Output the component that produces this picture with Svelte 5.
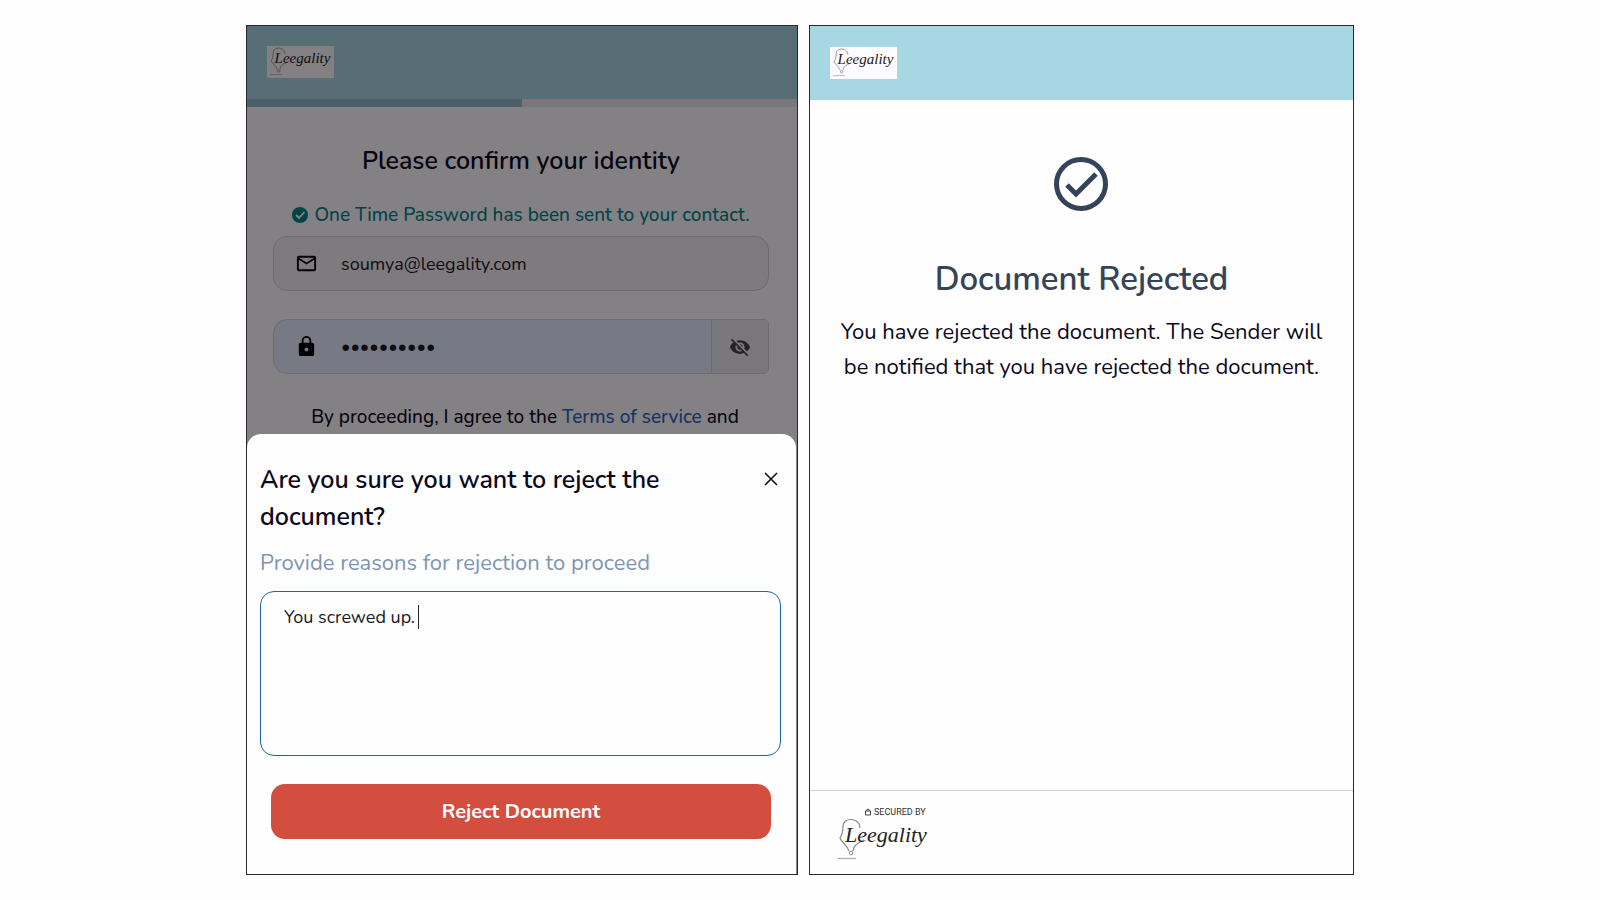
<script>
  let email = "soumya@leegality.com";
  let password = "abcdefghij";
  let reason = "You screwed up. ";
  let showPassword = false;
</script>

{#snippet logo()}
  <svg class="logo" viewBox="0 0 90 44" role="img" aria-label="Leegality">
    <path
      d="M22 10C22 -1 5 -1 5 8C5 14 4 17 2 20C4 25 9 27 11 33M15 33C15 28 19 25 26 22"
      fill="none"
      stroke="#888"
      stroke-width="1.2"
    />
    <circle cx="13" cy="35" r="1.8" fill="none" stroke="#888" />
    <path d="M0 40.500H18" stroke="#aaa" stroke-width="1.2" />
    <text x="7" y="24">Leegality</text>
  </svg>
{/snippet}

<div class="page">
  <main class="phone confirm">
    <header>
      <div class="brand">{@render logo()}</div>
    </header>
    <div class="progress"><div class="bar"></div></div>

    <form class="identity">
      <h2>Please confirm your identity</h2>
      <p class="sent">
        <svg width="16" height="16" viewBox="0 0 16 16" aria-hidden="true">
          <circle cx="8" cy="8" r="8" fill="currentColor" />
          <path d="M4 8L7 11L12.500 5" fill="none" stroke="#fff" stroke-width="1.8" />
        </svg>
        One Time Password has been sent to your contact.
      </p>

      <label class="field">
        <svg width="23" height="23" viewBox="0 0 24 24" aria-label="Email">
          <path
            d="M22 6c0-1.100-.9-2-2-2H4c-1.100 0-2 .9-2 2v12c0 1.100.9 2 2 2h16c1.100 0 2-.9 2-2V6zm-2 0l-8 5-8-5h16zm0 12H4V8l8 5 8-5v10z"
          />
        </svg>
        <input type="email" bind:value={email} />
      </label>

      <div class="field secret">
        <label for="otp">
          <svg width="23" height="23" viewBox="0 0 24 24" aria-label="Password">
            <path
              d="M18 8h-1V6c0-2.760-2.240-5-5-5S7 3.240 7 6v2H6c-1.100 0-2 .9-2 2v10c0 1.100.9 2 2 2h12c1.100 0 2-.9 2-2V10c0-1.100-.9-2-2-2zm-6 9c-1.100 0-2-.9-2-2s.9-2 2-2 2 .9 2 2-.9 2-2 2zm3.100-9H8.900V6c0-1.710 1.390-3.100 3.100-3.100s3.100 1.390 3.100 3.100v2z"
            />
          </svg>
        </label>
        <input id="otp" type={showPassword ? "text" : "password"} value={password} />
        <button
          type="button"
          class="eye"
          aria-label="Show password"
          on:click={() => (showPassword = !showPassword)}
        >
          <svg width="22" height="22" viewBox="0 0 24 24">
            <path
              d="M12 7c2.760 0 5 2.240 5 5 0 .65-.13 1.260-.36 1.830l2.920 2.920c1.510-1.260 2.700-2.890 3.430-4.750-1.730-4.390-6-7.500-11-7.500-1.400 0-2.740.25-3.980.7l2.160 2.160C10.740 7.130 11.350 7 12 7zM2 4.270l2.280 2.280.46.46C3.080 8.300 1.780 10.020 1 12c1.730 4.390 6 7.500 11 7.500 1.550 0 3.030-.3 4.380-.84l.42.42L19.730 22 21 20.730 3.270 3 2 4.270zM7.530 9.800l1.550 1.550c-.05.21-.08.43-.08.65 0 1.660 1.340 3 3 3 .22 0 .44-.03.65-.08l1.550 1.550c-.67.33-1.410.53-2.200.53-2.760 0-5-2.240-5-5 0-.79.2-1.530.53-2.200zm4.310-.78l3.150 3.150.02-.16c0-1.660-1.340-3-3-3l-.17.01z"
            />
          </svg>
        </button>
      </div>

      <p class="terms">
        By proceeding, I agree to the <a href="#terms">Terms of service</a> and
      </p>
    </form>

    <div class="backdrop"></div>

    <section class="sheet" role="dialog" aria-labelledby="reject-title">
      <div class="sheet-head">
        <h2 id="reject-title">Are you sure you want to reject the document?</h2>
        <button type="button" class="close" aria-label="Close">
          <svg width="14" height="14" viewBox="0 0 14 14">
            <path d="M1 1L13 13M13 1L1 13" stroke="#111" stroke-width="1.6" />
          </svg>
        </button>
      </div>
      <label class="hint" for="reason">Provide reasons for rejection to proceed</label>
      <div class="reason">
        <textarea id="reason" bind:value={reason}></textarea>
        <span class="caret"></span>
      </div>
      <button type="button" class="reject">Reject Document</button>
    </section>
  </main>

  <section class="phone result">
    <header>
      <div class="brand">{@render logo()}</div>
    </header>
    <div class="message">
      <svg class="done" width="54" height="54" viewBox="0 0 54 54" aria-hidden="true">
        <circle cx="27" cy="27" r="24.500" fill="none" stroke="#33445a" stroke-width="5" />
        <path d="M13 28L22 37L42 17" fill="none" stroke="#33445a" stroke-width="5" />
      </svg>
      <h1>Document Rejected</h1>
      <p>You have rejected the document. The Sender will be notified that you have rejected the document.</p>
    </div>
    <footer>
      <div class="secured">
        <svg width="6" height="8" viewBox="0 0 6 8" aria-hidden="true">
          <path d="M.5 3H5.500V7H.5ZM1.500 3V2Q3 0 4.500 2V3" fill="none" stroke="#444" />
        </svg>
        SECURED BY
      </div>
      {@render logo()}
    </footer>
  </section>
</div>

<style>
  :global(body) {
    margin: 0;
    background: #fefefe;
  }

  .page {
    display: flex;
    gap: 11px;
    box-sizing: border-box;
    min-height: 100vh;
    max-width: 1108px;
    margin: 0 auto;
    padding: 25px 0;
    font-family: Nunito, Lato, sans-serif;
    color: #0c0820;
  }

  .phone {
    position: relative;
    display: flex;
    flex-direction: column;
    box-sizing: border-box;
    border: 1px solid #2b272c;
    background: #fefefe;
    overflow: hidden;
  }
  .confirm {
    flex: 552 1 0;
  }
  .result {
    flex: 545 1 0;
  }

  h1,
  h2,
  p {
    margin: 0;
  }
  input,
  textarea,
  button {
    font-family: inherit;
  }
  svg {
    flex: none;
  }

  header {
    box-sizing: border-box;
    height: 73px;
    padding: 20px;
    background: #a8d7e4;
  }
  .result header {
    height: 74px;
    padding-top: 21px;
  }
  .brand {
    display: flex;
    justify-content: center;
    align-items: center;
    width: 67px;
    height: 32px;
    background: #fdfbfd;
  }
  .brand .logo {
    width: 63px;
    height: 30px;
  }
  .logo {
    display: block;
    width: 90px;
    height: 44px;
  }
  .logo text {
    font: italic 22px "Liberation Serif", serif;
    fill: #222;
  }

  .progress {
    height: 8px;
    background: #ece8ee;
  }
  .bar {
    width: 50%;
    height: 100%;
    background: #92bdcd;
  }

  .identity {
    display: flex;
    flex-direction: column;
    padding: 36px 28px 0 26px;
  }
  .identity h2 {
    font-size: 25px;
    line-height: 36px;
    font-weight: 600;
    text-align: center;
  }
  .sent {
    display: flex;
    justify-content: center;
    align-items: center;
    gap: 6px;
    margin: 21px 0 6px;
    font-size: 19px;
    line-height: 30px;
    font-weight: 500;
    color: #008488;
  }

  .field {
    display: flex;
    align-items: center;
    box-sizing: border-box;
    height: 55px;
    padding-left: 21px;
    border: 1px solid #d2d0d8;
    border-radius: 14px;
    background: #f3f0f4;
  }
  .field input {
    flex: 1;
    min-width: 0;
    margin-left: 23px;
    padding: 0;
    border: 0;
    outline: 0;
    background: none;
    font-size: 18px;
    color: #1c1824;
  }
  .secret {
    margin-top: 28px;
    border-radius: 14px 6px 6px 14px;
    background: #e6f0ff;
  }
  .secret label {
    display: flex;
  }
  .eye {
    display: flex;
    justify-content: center;
    align-items: center;
    align-self: stretch;
    width: 57px;
    padding: 0;
    border: 0;
    border-left: 1px solid #ced2d8;
    border-radius: 0 5px 5px 0;
    background: #e9eaee;
    fill: #444;
  }

  .terms {
    margin-top: 28px;
    padding-left: 8px;
    font-size: 19px;
    line-height: 30px;
    font-weight: 500;
    text-align: center;
  }
  .terms a {
    color: #1f66be;
    text-decoration: none;
  }

  .backdrop {
    position: absolute;
    inset: 0;
    background: rgba(4, 0, 4, 0.49);
  }

  .sheet {
    position: absolute;
    left: 0;
    right: 1px;
    bottom: 0;
    display: flex;
    flex-direction: column;
    padding: 28px 15px 35px 13px;
    border-radius: 14px 14px 0 0;
    background: #fefefe;
  }
  .sheet-head {
    display: flex;
    justify-content: space-between;
    align-items: flex-start;
  }
  .sheet h2 {
    max-width: 430px;
    font-size: 25px;
    line-height: 37px;
    font-weight: 600;
  }
  .close {
    display: flex;
    margin: 10px 3px 0 0;
    padding: 0;
    border: 0;
    background: none;
  }
  .hint {
    margin: 11px 0 12px;
    font-size: 22px;
    line-height: 32px;
    color: #7d95b2;
  }
  .reason {
    position: relative;
    display: flex;
  }
  textarea {
    flex: 1;
    box-sizing: border-box;
    height: 165px;
    padding: 11px 23px;
    border: 1px solid #1767ae;
    border-radius: 14px;
    outline: 0;
    background: #fefefe;
    color: #1b1822;
    font-size: 18px;
    line-height: 28px;
    resize: none;
  }
  .caret {
    position: absolute;
    top: 14px;
    left: 158px;
    width: 1px;
    height: 24px;
    background: #222;
  }
  .reject {
    height: 55px;
    margin: 28px 10px 0 11px;
    border: 0;
    border-radius: 14px;
    background: #d44e3f;
    color: #fff;
    font-size: 20px;
    font-weight: 700;
  }

  .message {
    display: flex;
    flex: 1;
    flex-direction: column;
    align-items: center;
    padding: 57px 28px 0;
    text-align: center;
  }
  h1 {
    margin: 46px 0 12px;
    font-size: 33px;
    line-height: 46px;
    font-weight: 600;
    color: #364458;
  }
  .message p {
    font-size: 22px;
    line-height: 35px;
  }

  footer {
    box-sizing: border-box;
    height: 84px;
    padding: 15px 28px;
    border-top: 1px solid #cbd0dd;
  }
  .secured {
    display: flex;
    align-items: center;
    gap: 3px;
    margin-left: 27px;
    font: 9px/12px Roboto, sans-serif;
    color: #333;
  }
</style>
